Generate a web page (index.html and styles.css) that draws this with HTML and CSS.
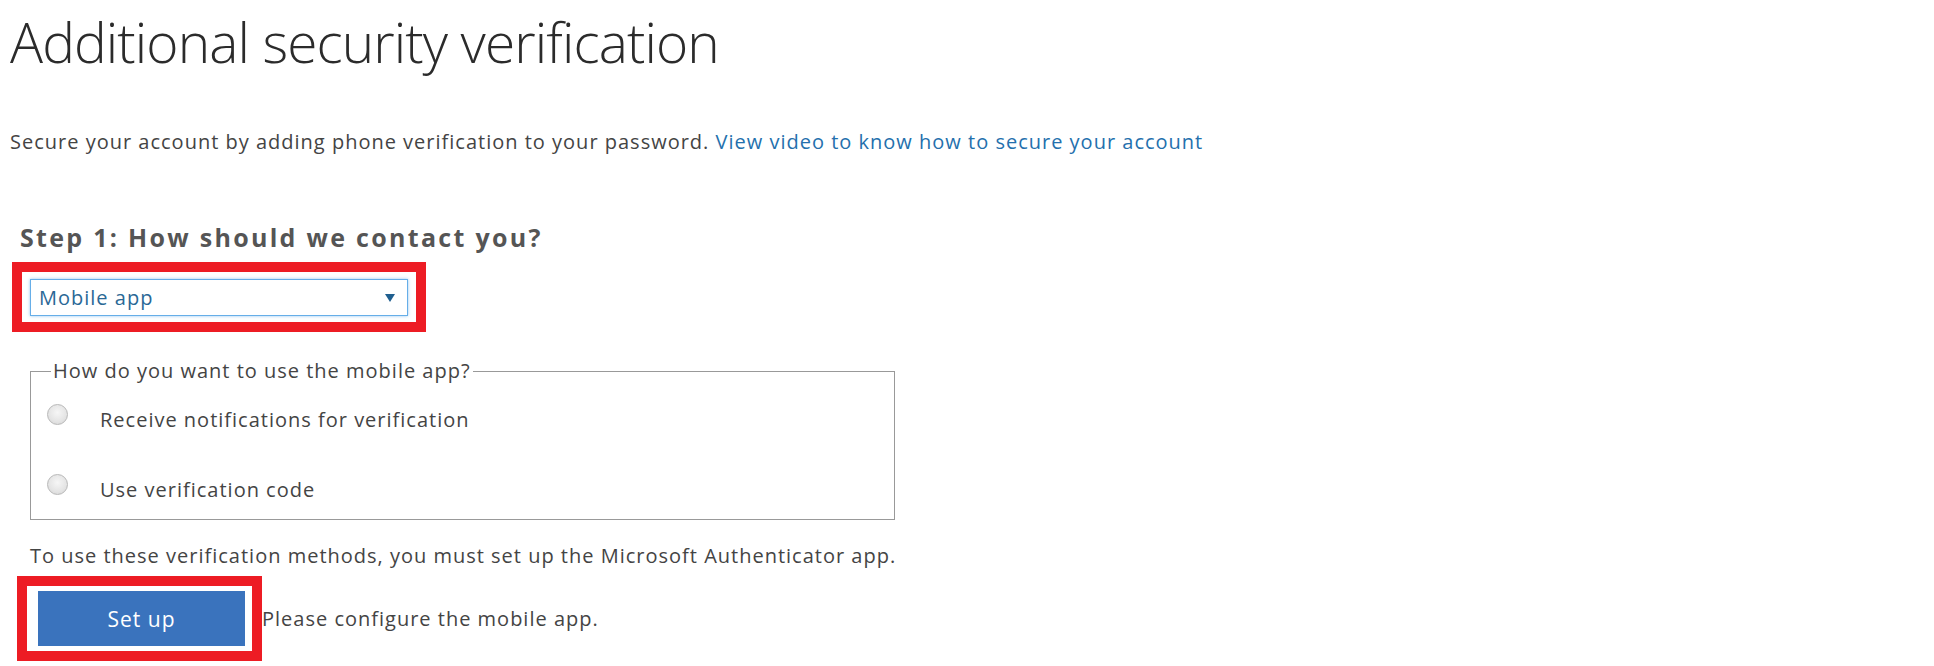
FILE: index.html
```html
<!DOCTYPE html>
<html>
<head>
<meta charset="utf-8">
<link rel="stylesheet" href="styles.css">
</head>
<body>
<div class="page">
  <h1 class="title">Additional security verification</h1>
  <p class="intro">Secure your account by adding phone verification to your password. <a class="link" href="#">View video to know how to secure your account</a></p>
  <h2 class="step">Step 1: How should we contact you?</h2>
  <div class="hl hl-select">
    <div class="select">
      <span class="select-text">Mobile app</span>
      <svg class="caret" width="12" height="10" viewBox="0 0 12 10"><path d="M1 1 L11 1 L6 9 Z" fill="#1f5f8f"/></svg>
    </div>
  </div>
  <fieldset class="box">
    <legend class="legend">How do you want to use the mobile app?</legend>
    <label class="opt"><span class="radio"></span><span>Receive notifications for verification</span></label>
    <label class="opt"><span class="radio"></span><span>Use verification code</span></label>
  </fieldset>
  <p class="note">To use these verification methods, you must set up the Microsoft Authenticator app.</p>
  <div class="setup-row">
    <div class="hl hl-btn"><button class="btn">Set up</button></div>
    <span class="hint">Please configure the mobile app.</span>
  </div>
</div>
</body>
</html>
```
FILE: styles.css
```css
html, body {
  margin: 0;
  background: #fff;
}
.page {
  font-family: "Open Sans", "Noto Sans", sans-serif;
  color: #444;
  padding: 0 0 0 10px;
}
.title {
  font-weight: 300;
  font-size: 55px;
  line-height: 60px;
  color: #2b2b2b;
  margin: 12px 0 0 0;
  letter-spacing: -0.9px;
}
.intro {
  font-size: 20px;
  line-height: 24px;
  margin: 58px 0 0 0;
  color: #444;
  letter-spacing: 1px;
}
.link {
  color: #2470ad;
  text-decoration: none;
}
.step {
  font-size: 25px;
  font-weight: 700;
  color: #555;
  margin: 68px 0 0 10px;
  line-height: 30px;
  letter-spacing: 2.3px;
}
.hl {
  border: 10px solid #ed1c24;
  background: #fff;
  box-sizing: border-box;
}
.hl-select {
  width: 414px;
  margin: 10px 0 0 2px;
  padding: 7px 8px 6px 8px;
}
.select {
  height: 37px;
  box-sizing: border-box;
  border: 1px solid #66aee8;
  box-shadow: 0 0 3px rgba(102,174,232,.7);
  display: flex;
  align-items: center;
  justify-content: space-between;
  padding: 0 11px 0 8px;
}
.select-text {
  font-size: 20px;
  color: #2a6896;
  letter-spacing: 1px;
}
.caret { display: block; }
.box {
  margin: 29px 0 0 20px;
  width: 865px;
  box-sizing: border-box;
  border: 1px solid #999;
  padding: 24px 0 0 16px;
  height: 159px;
}
.legend {
  font-size: 20px;
  color: #444;
  padding: 0 2px 0 2px;
  margin-left: 4px;
  line-height: 20px;
  letter-spacing: 1px;
}
.opt {
  display: flex;
  align-items: center;
  font-size: 20px;
  letter-spacing: 1px;
  color: #444;
  height: 28px;
  margin-bottom: 42px;
}
.opt:last-child { margin-bottom: 0; }
.radio {
  width: 19px;
  height: 19px;
  border-radius: 50%;
  border: 1px solid #b8b8b8;
  background: radial-gradient(circle at 50% 40%, #f6f6f6 0%, #e4e4e4 60%, #d2d2d2 100%);
  margin: -10px 32px 0 0;
  flex: none;
}
.note {
  font-size: 20px;
  letter-spacing: 1px;
  color: #444;
  margin: 23px 0 0 20px;
  line-height: 26px;
}
.setup-row {
  display: flex;
  align-items: center;
  margin: 7px 0 0 7px;
}
.hl-btn {
  width: 245px;
  height: 85px;
  padding: 5px 7px 5px 11px;
  display: flex;
}
.btn {
  flex: 1;
  background: #3a73bd;
  border: none;
  color: #fff;
  font-family: "Open Sans", "Noto Sans", sans-serif;
  font-size: 21px;
  letter-spacing: 1px;
  padding: 0;
  margin: 0;
}
.hint {
  font-size: 20px;
  letter-spacing: 1px;
  color: #444;
  margin-left: 0;
}
```
